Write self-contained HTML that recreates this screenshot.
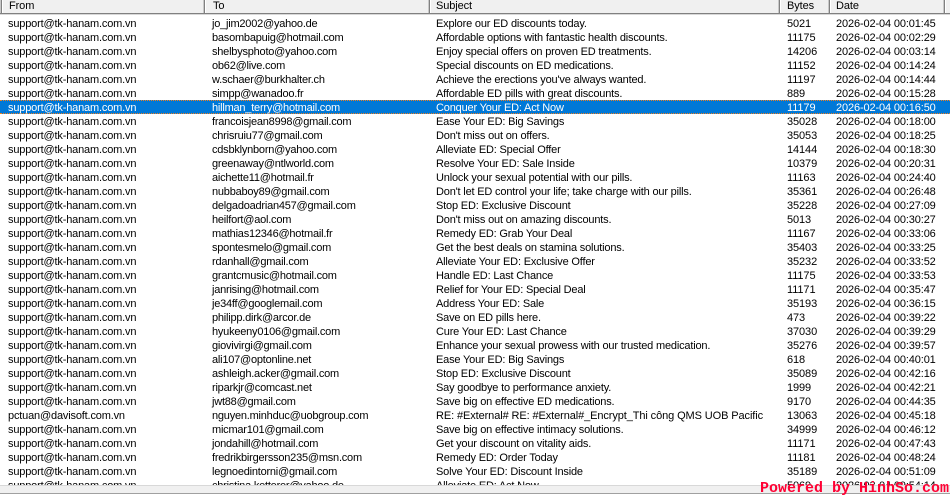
<!DOCTYPE html>
<html><head><meta charset="utf-8"><style>
html,body{margin:0;padding:0;background:#fff}
#w{position:relative;width:950px;height:495px;overflow:hidden;background:#fff;font:11px/14px "Liberation Sans",sans-serif;color:#000}
.h{position:absolute;top:0;left:0;width:950px;height:13px;background:#f0f0f0;border-bottom:1px solid #808080;box-shadow:0 1px 0 #d8d8d8}
.s{position:absolute;top:0;height:13px;width:1px;background:#808080;border-right:1px solid #fff;border-left:1px solid #c8c8c8}
.t{position:absolute;top:0;line-height:12px;white-space:nowrap;letter-spacing:-.1px}
#r{position:absolute;top:16px;left:0;width:950px;height:469px;overflow:hidden}
.r{position:relative;height:14px;white-space:nowrap}
.r span{position:absolute;top:1px}
.r span:nth-child(1){left:8px;letter-spacing:-.17px}.r span:nth-child(2){left:212px;letter-spacing:-.22px}.r span:nth-child(3){left:436px;letter-spacing:-.18px}.r span:nth-child(4){left:787px;letter-spacing:-.1px}.r span:nth-child(5){left:836px;letter-spacing:-.13px}
.r span.x:nth-child(3){letter-spacing:-.1px}
.sel{background:#0078d7;color:#fff;box-sizing:border-box;border-top:1px dotted #f08020;border-bottom:1px dotted #f08020;line-height:12px}
.b{position:absolute;left:0;top:485px;width:950px;height:8px;background:#f0f0f0;border-top:1px solid #d8d8d8;box-sizing:border-box}
.l{position:absolute;left:0;top:493px;width:950px;height:1px;background:#a0a0a0}
.wm{position:absolute;left:760px;top:480px;font:bold 15px/17px "Liberation Mono",monospace;color:#ff0033;white-space:nowrap}
</style></head><body><div id="w">
<div class="h"></div>
<div class="s" style="left:0"></div><div class="s" style="left:203px"></div><div class="s" style="left:428px"></div><div class="s" style="left:778px"></div><div class="s" style="left:828px"></div><div class="s" style="left:943px"></div>
<div class="t" style="left:9px">From</div><div class="t" style="left:213px">To</div><div class="t" style="left:436px">Subject</div><div class="t" style="left:787px">Bytes</div><div class="t" style="left:836px">Date</div>
<div id="r">
<div class="r"><span>support@tk-hanam.com.vn</span><span>jo_jim2002@yahoo.de</span><span>Explore our ED discounts today.</span><span>5021</span><span>2026-02-04 00:01:45</span></div>
<div class="r"><span>support@tk-hanam.com.vn</span><span>basombapuig@hotmail.com</span><span>Affordable options with fantastic health discounts.</span><span>11175</span><span>2026-02-04 00:02:29</span></div>
<div class="r"><span>support@tk-hanam.com.vn</span><span>shelbysphoto@yahoo.com</span><span>Enjoy special offers on proven ED treatments.</span><span>14206</span><span>2026-02-04 00:03:14</span></div>
<div class="r"><span>support@tk-hanam.com.vn</span><span>ob62@live.com</span><span>Special discounts on ED medications.</span><span>11152</span><span>2026-02-04 00:14:24</span></div>
<div class="r"><span>support@tk-hanam.com.vn</span><span>w.schaer@burkhalter.ch</span><span>Achieve the erections you've always wanted.</span><span>11197</span><span>2026-02-04 00:14:44</span></div>
<div class="r"><span>support@tk-hanam.com.vn</span><span>simpp@wanadoo.fr</span><span>Affordable ED pills with great discounts.</span><span>889</span><span>2026-02-04 00:15:28</span></div>
<div class="r sel"><span>support@tk-hanam.com.vn</span><span>hillman_terry@hotmail.com</span><span>Conquer Your ED: Act Now</span><span>11179</span><span>2026-02-04 00:16:50</span></div>
<div class="r"><span>support@tk-hanam.com.vn</span><span>francoisjean8998@gmail.com</span><span>Ease Your ED: Big Savings</span><span>35028</span><span>2026-02-04 00:18:00</span></div>
<div class="r"><span>support@tk-hanam.com.vn</span><span>chrisruiu77@gmail.com</span><span>Don't miss out on offers.</span><span>35053</span><span>2026-02-04 00:18:25</span></div>
<div class="r"><span>support@tk-hanam.com.vn</span><span>cdsbklynborn@yahoo.com</span><span>Alleviate ED: Special Offer</span><span>14144</span><span>2026-02-04 00:18:30</span></div>
<div class="r"><span>support@tk-hanam.com.vn</span><span>greenaway@ntlworld.com</span><span>Resolve Your ED: Sale Inside</span><span>10379</span><span>2026-02-04 00:20:31</span></div>
<div class="r"><span>support@tk-hanam.com.vn</span><span>aichette11@hotmail.fr</span><span>Unlock your sexual potential with our pills.</span><span>11163</span><span>2026-02-04 00:24:40</span></div>
<div class="r"><span>support@tk-hanam.com.vn</span><span>nubbaboy89@gmail.com</span><span>Don't let ED control your life; take charge with our pills.</span><span>35361</span><span>2026-02-04 00:26:48</span></div>
<div class="r"><span>support@tk-hanam.com.vn</span><span>delgadoadrian457@gmail.com</span><span>Stop ED: Exclusive Discount</span><span>35228</span><span>2026-02-04 00:27:09</span></div>
<div class="r"><span>support@tk-hanam.com.vn</span><span>heilfort@aol.com</span><span>Don't miss out on amazing discounts.</span><span>5013</span><span>2026-02-04 00:30:27</span></div>
<div class="r"><span>support@tk-hanam.com.vn</span><span>mathias12346@hotmail.fr</span><span>Remedy ED: Grab Your Deal</span><span>11167</span><span>2026-02-04 00:33:06</span></div>
<div class="r"><span>support@tk-hanam.com.vn</span><span>spontesmelo@gmail.com</span><span>Get the best deals on stamina solutions.</span><span>35403</span><span>2026-02-04 00:33:25</span></div>
<div class="r"><span>support@tk-hanam.com.vn</span><span>rdanhall@gmail.com</span><span>Alleviate Your ED: Exclusive Offer</span><span>35232</span><span>2026-02-04 00:33:52</span></div>
<div class="r"><span>support@tk-hanam.com.vn</span><span>grantcmusic@hotmail.com</span><span>Handle ED: Last Chance</span><span>11175</span><span>2026-02-04 00:33:53</span></div>
<div class="r"><span>support@tk-hanam.com.vn</span><span>janrising@hotmail.com</span><span>Relief for Your ED: Special Deal</span><span>11171</span><span>2026-02-04 00:35:47</span></div>
<div class="r"><span>support@tk-hanam.com.vn</span><span>je34ff@googlemail.com</span><span>Address Your ED: Sale</span><span>35193</span><span>2026-02-04 00:36:15</span></div>
<div class="r"><span>support@tk-hanam.com.vn</span><span>philipp.dirk@arcor.de</span><span>Save on ED pills here.</span><span>473</span><span>2026-02-04 00:39:22</span></div>
<div class="r"><span>support@tk-hanam.com.vn</span><span>hyukeeny0106@gmail.com</span><span>Cure Your ED: Last Chance</span><span>37030</span><span>2026-02-04 00:39:29</span></div>
<div class="r"><span>support@tk-hanam.com.vn</span><span>giovivirgi@gmail.com</span><span>Enhance your sexual prowess with our trusted medication.</span><span>35276</span><span>2026-02-04 00:39:57</span></div>
<div class="r"><span>support@tk-hanam.com.vn</span><span>ali107@optonline.net</span><span>Ease Your ED: Big Savings</span><span>618</span><span>2026-02-04 00:40:01</span></div>
<div class="r"><span>support@tk-hanam.com.vn</span><span>ashleigh.acker@gmail.com</span><span>Stop ED: Exclusive Discount</span><span>35089</span><span>2026-02-04 00:42:16</span></div>
<div class="r"><span>support@tk-hanam.com.vn</span><span>riparkjr@comcast.net</span><span>Say goodbye to performance anxiety.</span><span>1999</span><span>2026-02-04 00:42:21</span></div>
<div class="r"><span>support@tk-hanam.com.vn</span><span>jwt88@gmail.com</span><span>Save big on effective ED medications.</span><span>9170</span><span>2026-02-04 00:44:35</span></div>
<div class="r"><span>pctuan@davisoft.com.vn</span><span>nguyen.minhduc@uobgroup.com</span><span class="x">RE: #External# RE: #External#_Encrypt_Thi công QMS UOB Pacific</span><span>13063</span><span>2026-02-04 00:45:18</span></div>
<div class="r"><span>support@tk-hanam.com.vn</span><span>micmar101@gmail.com</span><span>Save big on effective intimacy solutions.</span><span>34999</span><span>2026-02-04 00:46:12</span></div>
<div class="r"><span>support@tk-hanam.com.vn</span><span>jondahill@hotmail.com</span><span>Get your discount on vitality aids.</span><span>11171</span><span>2026-02-04 00:47:43</span></div>
<div class="r"><span>support@tk-hanam.com.vn</span><span>fredrikbirgersson235@msn.com</span><span>Remedy ED: Order Today</span><span>11181</span><span>2026-02-04 00:48:24</span></div>
<div class="r"><span>support@tk-hanam.com.vn</span><span>legnoedintorni@gmail.com</span><span>Solve Your ED: Discount Inside</span><span>35189</span><span>2026-02-04 00:51:09</span></div>
<div class="r"><span>support@tk-hanam.com.vn</span><span>christina.ketterer@yahoo.de</span><span>Alleviate ED: Act Now</span><span>5069</span><span>2026-03-04 09:54:14</span></div>
</div>
<div class="b"></div><div class="l"></div>
<div class="wm">Powered by HinhSo.com</div>
</div></body></html>
